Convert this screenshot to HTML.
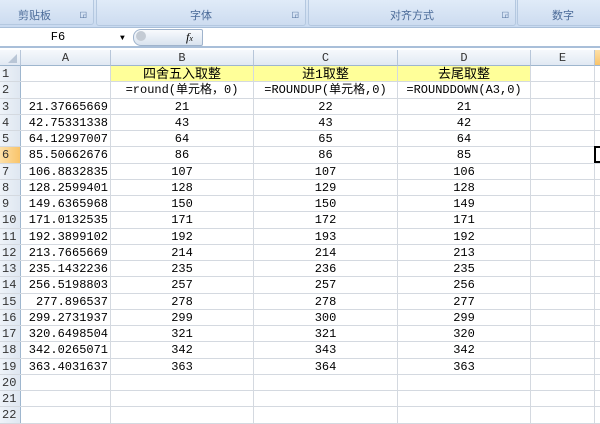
<!DOCTYPE html><html><head><meta charset="utf-8"><style>
body{margin:0;width:600px;height:423px;overflow:hidden;background:#fff;font-family:"Liberation Mono","Noto Sans CJK SC",monospace;font-size:12px;color:#000;position:relative}
.rib{position:absolute;left:0;top:0;width:600px;height:27px;background:linear-gradient(#dbe7f5,#c9daf0);border-bottom:1px solid #a9bfd9}
.grp{position:absolute;top:0;height:25px;background:linear-gradient(#e0ebf8,#cddcf0);border:1px solid #b4c8e0;border-top:none;border-radius:0 0 3px 3px;font-family:"Noto Sans CJK SC",sans-serif;font-size:11px;color:#4a6a98;text-align:center;line-height:30px}
.fb{position:absolute;left:0;top:28px;width:600px;height:18px;background:#fff;border-bottom:2px solid #a9bfd9}
.hdr{position:absolute;top:50px;height:16px;background:linear-gradient(#f6f9fc,#e1e9f3);border-right:1px solid #b7c6d9;border-bottom:1px solid #9eb6ce;text-align:center;line-height:17px;font-size:12px;color:#333;box-sizing:border-box}
.rows{position:absolute;left:0;top:66px;width:600px}
.r{height:16.25px;position:relative;box-sizing:border-box;border-bottom:1px solid #d4d9e0}
.r div{position:absolute;top:0;height:100%;line-height:17px;box-sizing:border-box;border-right:1px solid #d4d9e0;white-space:nowrap}
.rh{left:0;width:21px;background:linear-gradient(90deg,#eef3f9,#dfe7f1);color:#333;padding-left:2px;border-right:1px solid #9eb6ce!important}
.a{left:21px;width:90px;text-align:right;padding-right:2px}
.b{left:111px;width:143px;text-align:center}
.c{left:254px;width:144px;text-align:center}
.d{left:398px;width:133px;text-align:center}
.e{left:531px;width:64px}
.y{background:#ffff99}
.cj{font-family:"Liberation Mono","Noto Sans CJK SC",monospace;font-size:13px}
</style></head><body>
<div class="rib">
<div class="grp" style="left:-3px;width:97px;text-align:left;padding-left:20px;box-sizing:border-box">剪贴板<span style="position:absolute;right:6px;font-size:8px">◲</span></div>
<div class="grp" style="left:96px;width:208px">字体<span style="position:absolute;right:6px;font-size:8px">◲</span></div>
<div class="grp" style="left:308px;width:206px">对齐方式<span style="position:absolute;right:6px;font-size:8px">◲</span></div>
<div class="grp" style="left:517px;width:90px">数字</div>
</div>
<div class="fb">
<div style="position:absolute;left:0;top:0;width:116px;text-align:center;line-height:19px;font-size:12px">F6</div>
<div style="position:absolute;left:120px;top:6px;font-size:8px">▼</div>
<div style="position:absolute;left:133px;top:1px;width:68px;height:15px;border:1px solid #9fb3cc;border-radius:8px 2px 2px 8px;background:linear-gradient(#f8fafd,#d9e3ef)"></div>
<div style="position:absolute;left:136px;top:3px;width:10px;height:10px;border-radius:50%;background:#c4cbd4"></div>
<div style="position:absolute;left:186px;top:0;font-family:'Liberation Serif',serif;font-style:italic;font-size:12px;line-height:18px">f<span style="font-size:8px">x</span></div>
</div>
<div class="hdr" style="left:0;width:21px"><span style="position:absolute;right:3px;bottom:2px;width:0;height:0;border-left:9px solid transparent;border-bottom:9px solid #b9c6d6"></span></div>
<div class="hdr" style="left:21px;width:90px">A</div>
<div class="hdr" style="left:111px;width:143px">B</div>
<div class="hdr" style="left:254px;width:144px">C</div>
<div class="hdr" style="left:398px;width:133px">D</div>
<div class="hdr" style="left:531px;width:64px">E</div>
<div class="hdr" style="left:595px;width:10px;background:linear-gradient(#fde0a8,#f9c46a)"></div>
<div class="rows">
<div class="r"><div class="rh">1</div><div class="a"></div><div class="b y cj">四舍五入取整</div><div class="c y cj">进1取整</div><div class="d y cj">去尾取整</div><div class="e"></div></div>
<div class="r"><div class="rh">2</div><div class="a"></div><div class="b">=round(单元格，0)</div><div class="c">=ROUNDUP(单元格,0)</div><div class="d">=ROUNDDOWN(A3,0)</div><div class="e"></div></div>
<div class="r"><div class="rh">3</div><div class="a">21.37665669</div><div class="b">21</div><div class="c">22</div><div class="d">21</div><div class="e"></div></div>
<div class="r"><div class="rh">4</div><div class="a">42.75331338</div><div class="b">43</div><div class="c">43</div><div class="d">42</div><div class="e"></div></div>
<div class="r"><div class="rh">5</div><div class="a">64.12997007</div><div class="b">64</div><div class="c">65</div><div class="d">64</div><div class="e"></div></div>
<div class="r"><div class="rh" style="background:linear-gradient(90deg,#fde0a8,#f9c46a)">6</div><div class="a">85.50662676</div><div class="b">86</div><div class="c">86</div><div class="d">85</div><div class="e"></div><div style="left:594px;width:8px;border:2px solid #000;top:-1px;height:17px"></div></div>
<div class="r"><div class="rh">7</div><div class="a">106.8832835</div><div class="b">107</div><div class="c">107</div><div class="d">106</div><div class="e"></div></div>
<div class="r"><div class="rh">8</div><div class="a">128.2599401</div><div class="b">128</div><div class="c">129</div><div class="d">128</div><div class="e"></div></div>
<div class="r"><div class="rh">9</div><div class="a">149.6365968</div><div class="b">150</div><div class="c">150</div><div class="d">149</div><div class="e"></div></div>
<div class="r"><div class="rh">10</div><div class="a">171.0132535</div><div class="b">171</div><div class="c">172</div><div class="d">171</div><div class="e"></div></div>
<div class="r"><div class="rh">11</div><div class="a">192.3899102</div><div class="b">192</div><div class="c">193</div><div class="d">192</div><div class="e"></div></div>
<div class="r"><div class="rh">12</div><div class="a">213.7665669</div><div class="b">214</div><div class="c">214</div><div class="d">213</div><div class="e"></div></div>
<div class="r"><div class="rh">13</div><div class="a">235.1432236</div><div class="b">235</div><div class="c">236</div><div class="d">235</div><div class="e"></div></div>
<div class="r"><div class="rh">14</div><div class="a">256.5198803</div><div class="b">257</div><div class="c">257</div><div class="d">256</div><div class="e"></div></div>
<div class="r"><div class="rh">15</div><div class="a">277.896537</div><div class="b">278</div><div class="c">278</div><div class="d">277</div><div class="e"></div></div>
<div class="r"><div class="rh">16</div><div class="a">299.2731937</div><div class="b">299</div><div class="c">300</div><div class="d">299</div><div class="e"></div></div>
<div class="r"><div class="rh">17</div><div class="a">320.6498504</div><div class="b">321</div><div class="c">321</div><div class="d">320</div><div class="e"></div></div>
<div class="r"><div class="rh">18</div><div class="a">342.0265071</div><div class="b">342</div><div class="c">343</div><div class="d">342</div><div class="e"></div></div>
<div class="r"><div class="rh">19</div><div class="a">363.4031637</div><div class="b">363</div><div class="c">364</div><div class="d">363</div><div class="e"></div></div>
<div class="r"><div class="rh">20</div><div class="a"></div><div class="b"></div><div class="c"></div><div class="d"></div><div class="e"></div></div>
<div class="r"><div class="rh">21</div><div class="a"></div><div class="b"></div><div class="c"></div><div class="d"></div><div class="e"></div></div>
<div class="r"><div class="rh">22</div><div class="a"></div><div class="b"></div><div class="c"></div><div class="d"></div><div class="e"></div></div>
</div>
</body></html>
